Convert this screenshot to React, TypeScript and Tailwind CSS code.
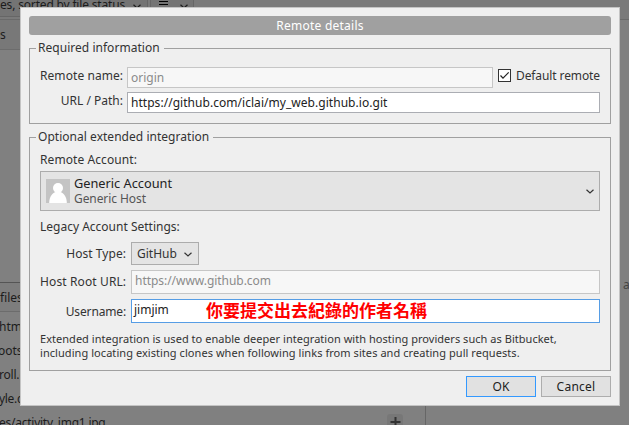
import type { ReactNode } from "react";

function Chevron({ className = "" }: { className?: string }) {
  return (
    <svg viewBox="0 0 8 5" className={`h-[5px] w-2 shrink-0 ${className}`} fill="none" stroke="currentColor" strokeWidth="1.2">
      <path d="M0.5 0.7 L4 3.9 L7.5 0.7" />
    </svg>
  );
}

function Group({ title, className, children }: { title: string; className: string; children: ReactNode }) {
  return (
    <section className={`relative border border-[#a0a0a0] ${className}`}>
      <h2 className="absolute -top-[9px] left-[6px] bg-[#efefef] pl-[2px] pr-1 leading-4 tracking-[0.03px]">{title}</h2>
      {children}
    </section>
  );
}

function Backdrop() {
  return (
    <div className="flex h-[425px] flex-col bg-[#808080] text-[#1c1c1c]">
      <div className="flex h-5 border-b border-[#6a6a6a] bg-[#7a7a7a]">
        <div className="flex h-[17px] w-[148px] items-start justify-between border-r border-b border-[#666] bg-[#747474] pr-[6px]">
          <span className="-mt-[3px] tracking-[-0.17px] leading-4 whitespace-pre">es, sorted by file status</span>
          <Chevron className="mt-1" />
        </div>
        <div className="ml-[2px] flex h-[17px] w-[44px] items-start justify-between border-x border-b border-[#666] bg-[#747474] pl-2 pr-[5px]">
          <div className="mt-px flex flex-col gap-[2px]">
            <i className="h-px w-[9px] bg-black" />
            <i className="h-px w-[9px] bg-black" />
          </div>
          <Chevron className="mt-1" />
        </div>
      </div>
      <div className="flex flex-1">
        <div className="flex w-[425px] flex-col">
          <div className="h-[30px] border-b border-[#6c6c6c] bg-[#787878] pt-[7px] leading-4">s</div>
          <div className="h-[233px] border-b border-[#555]" />
          <div className="h-[29px] border-b border-[#6c6c6c] bg-[#7d7d7d] pt-[7px] leading-4">files</div>
          <div className="flex-1 pt-[3px] leading-6 whitespace-pre">
            <div className="-ml-px">htm</div>
            <div className="-ml-[2px]">oots</div>
            <div className="-ml-px tracking-[-0.2px]">roll.c</div>
            <div className="-ml-px tracking-[-0.3px]">yle.c</div>
            <div className="-ml-px h-3 tracking-[-0.25px]">es/activity_img1.jpg</div>
          </div>
        </div>
        <div className="flex-1 border-l border-[#666]" />
      </div>
    </div>
  );
}

export default function App() {
  return (
    <div className="relative h-[425px] w-[629px] overflow-hidden font-['Noto_Sans','Noto_Sans_CJK_TC',sans-serif] text-[12px]">
      <Backdrop />
      <div className="absolute top-[414px] left-[387px] flex h-[15px] w-[16px] justify-center rounded-[3px] bg-[#777]">
        <svg viewBox="0 0 11 11" className="mt-[3px] h-[11px] w-[11px]" stroke="#333" strokeWidth="2">
          <path d="M0.5 5 H10.5 M5.5 0 V10" />
        </svg>
      </div>
      <span className="absolute top-[276px] left-[623px] text-[12px] text-[#444]">a</span>

      <div className="absolute top-[7px] left-5 flex h-[399px] w-[600px] flex-col border border-[#c4c4c4] bg-[#efefef] px-2 pt-2 text-[#333]">
        <h1 className="h-[19px] rounded-[3px] bg-[#a0a0a0] text-center leading-[19px] tracking-[0.25px] text-white">Remote details</h1>

        <Group title="Required information" className="mt-[13px] h-[76px] px-[10px] pt-[18px]">
          <div className="flex h-[21px]">
            <label className="w-[87px] shrink-0 pt-px leading-4 tracking-[0.07px]">Remote name:</label>
            <div className="h-[21px] w-[366px] border border-[#c6c6c6] bg-[#f7f7f7] pt-[2px] pl-[3px] leading-4 text-[#8b8b8b]">origin</div>
            <div className="ml-[5px] flex h-[17px]">
              <svg viewBox="0 0 13 13" className="mt-[2px] h-[13px] w-[13px]">
                <rect x="0.5" y="0.5" width="12" height="12" fill="#fff" stroke="#333" />
                <path d="M2.5 6.5 L5 9.2 L10.7 3.3" fill="none" stroke="#222" strokeWidth="1.2" />
              </svg>
              <span className="ml-[5px] pt-px leading-4 tracking-[-0.1px] whitespace-nowrap">Default remote</span>
            </div>
          </div>
          <div className="mt-1 flex h-[21px]">
            <label className="w-[87px] shrink-0 pt-px pr-1 text-right leading-4">URL / Path:</label>
            <div className="h-[21px] flex-1 border border-[#abadb3] bg-white pt-[2px] pl-[3px] leading-4 tracking-[0.04px] text-[#222]">
              https://github.com/iclai/my_web.github.io.git
            </div>
          </div>
        </Group>

        <Group title="Optional extended integration" className="mt-[13px] h-[234px] px-[10px] pt-[14px]">
          <div className="h-[19px] leading-4 tracking-[0.08px]">Remote Account:</div>
          <div className="flex h-10 items-start border border-[#acacac] bg-[#e4e4e4] pt-[7px] pr-[5px] pl-[5px]">
            <svg viewBox="0 0 24 24" className="h-6 w-6">
              <rect width="24" height="24" fill="#c4c4c4" />
              <circle cx="12" cy="9" r="5" fill="#fff" />
              <path d="M3.2 24 C3.2 17.5 6.5 14.2 9.5 13 H14.5 C17.5 14.2 20.8 17.5 20.8 24 Z" fill="#fff" />
            </svg>
            <div className="ml-1 -mt-[3px] flex-1">
              <div className="text-[12.75px] leading-[15px] text-[#222]">Generic Account</div>
              <div className="leading-4 tracking-[-0.08px] text-[#555]">Generic Host</div>
            </div>
            <Chevron className="mt-[10px]" />
          </div>
          <div className="mt-2 h-[23px] leading-4">Legacy Account Settings:</div>
          <div className="flex h-[23px]">
            <label className="w-[91px] shrink-0 pt-1 pr-[5px] text-right leading-4 tracking-[0.05px]">Host Type:</label>
            <div className="flex w-[68px] border border-[#acacac] bg-[#e4e4e4] pt-[3px] pr-[6px] pl-[5px] leading-4">
              <span className="flex-1">GitHub</span>
              <Chevron className="mt-[6px]" />
            </div>
          </div>
          <div className="mt-[5px] flex h-6">
            <label className="w-[91px] shrink-0 pt-1 leading-4 tracking-[0.12px] whitespace-nowrap">Host Root URL:</label>
            <div className="flex-1 border border-[#c6c6c6] bg-[#f7f7f7] pt-[2px] pl-[3px] leading-4 tracking-[-0.04px] text-[#8b8b8b]">https://www.github.com</div>
          </div>
          <div className="mt-[5px] flex h-6">
            <label className="w-[91px] shrink-0 pt-[5px] pr-[5px] text-right leading-4 tracking-[-0.15px]">Username:</label>
            <div className="flex flex-1 border border-[#569de5] bg-white pl-[2px] text-[#222]">
              <span className="w-[72px] pt-[2px] leading-4">jimjim</span>
              <span className="font-['Noto_Sans_CJK_TC',sans-serif] text-[17px] leading-[19px] font-bold text-[#f00]">你要提交出去紀錄的作者名稱</span>
            </div>
          </div>
          <p className="mt-[9px] text-[11px] leading-[14px] whitespace-nowrap">
            <span className="block tracking-[0.035px]">Extended integration is used to enable deeper integration with hosting providers such as Bitbucket,</span>
            <span className="block tracking-[0.06px]">including locating existing clones when following links from sites and creating pull requests.</span>
          </p>
        </Group>

        <div className="mt-[5px] flex justify-end gap-[5px] text-center leading-[19px] text-[#222]">
          <button className="h-[21px] w-[70px] border border-[#3399ff] bg-[#e1e1e1]">OK</button>
          <button className="h-[21px] w-[70px] border border-[#adadad] bg-[#e1e1e1] tracking-[0.25px]">Cancel</button>
        </div>
      </div>
    </div>
  );
}
